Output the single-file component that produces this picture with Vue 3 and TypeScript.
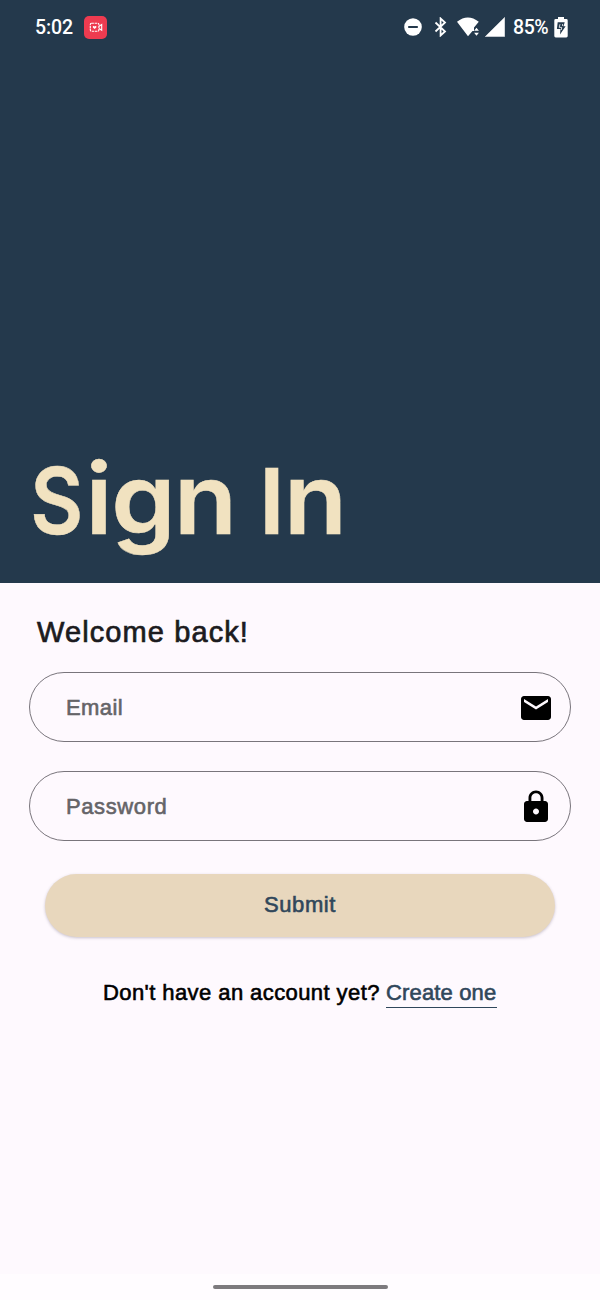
<script setup lang="ts">
import { ref } from 'vue'

const email = ref<string>('')
const password = ref<string>('')
</script>

<template>
  <main class="screen">
    <header class="hero">
      <div class="status">
        <span class="time">5:02</span>
        <svg class="rec" width="23" height="23" viewBox="0 0 23 23">
          <rect width="23" height="23" rx="5" fill="#ee3b50" />
          <g fill="none" stroke="#fff" stroke-width="1.1">
            <rect x="6.3" y="7.3" width="8.6" height="8" rx="1.2" stroke-dasharray="2.4 .7" />
            <path d="M15 10.3l2.700-1.700v5.600L15 12.500" />
          </g>
          <path d="M10.600 13.100l-1.700-1.700c-.5-1.300 1-1.800 1.700-.8.7-1 2.200-.5 1.700.8z" fill="#fff" />
        </svg>
        <span class="grow"></span>
        <svg class="dnd" width="18" height="18" viewBox="0 0 18 18">
          <circle cx="9" cy="9" r="8.8" fill="#fff" />
          <path d="M4.200 9h9.600" stroke="#24394c" stroke-width="2" />
        </svg>
        <svg class="bt" width="14" height="20" viewBox="0 0 14 20">
          <path d="M1.500 5.500l9.500 9-4.400 4V1.500l4.400 4-9.500 9" fill="none" stroke="#fff" stroke-width="1.800" />
        </svg>
        <svg class="wifi" width="24" height="20" viewBox="0 0 24 20">
          <path d="M0 4.800Q10.800-3.800 21.800 4.800L17 10.500V14l-1.500 0L11 19.200z" fill="#fff" />
          <path d="M17.100 13.700l2.400-3 2.400 3zM17.100 15.700h4.800l-2.400 3z" fill="#fff" />
        </svg>
        <svg class="cell" width="20" height="20" viewBox="0 0 20 20">
          <path d="M19.600.4v19.200H.3z" fill="#fff" stroke="#fff" stroke-width=".5" />
        </svg>
        <span class="percent">85%</span>
        <svg class="battery" width="14" height="21" viewBox="0 0 14 21">
          <path d="M4 0h6v2h2.300q1.400 0 1.400 1.400v15.700q0 1.400-1.400 1.400H1.700Q.3 20.500.3 19.100V3.400Q.3 2 1.700 2H4z" fill="#fff" />
          <path d="M3.700 5.200h7L9.500 9.200h2.100L6 17.600l.5-5.500H2.900z" fill="#24394c" />
          <path d="M6 7.200l-.8 3.200h2.500L7.300 13M8.600 7v2" fill="none" stroke="#fff" stroke-width=".8" />
        </svg>
      </div>
      <h1 class="title">
        <svg width="340" height="122" viewBox="0 0 340 122">
          <text class="initial" transform="scale(.885 1)" x="11.700" y="85">S</text>
          <text class="letters" transform="scale(1.050 1)" y="85"><tspan x="62.300 86.900 146.800">ign</tspan><tspan class="capital" x="209 227.300"> I</tspan><tspan x="251.500">n</tspan></text>
        </svg>
      </h1>
    </header>

    <section class="body">
      <h2 class="welcome">Welcome back!</h2>
      <form @submit.prevent>
        <label class="field">
          <input v-model="email" class="email" type="text" placeholder="Email" />
          <svg width="36" height="36" viewBox="0 0 24 24">
            <path d="M20 4H4c-1.100 0-1.990.9-1.990 2L2 18c0 1.100.9 2 2 2h16c1.100 0 2-.9 2-2V6c0-1.100-.9-2-2-2zm0 4l-8 5-8-5V6l8 5 8-5v2z" />
          </svg>
        </label>
        <label class="field">
          <input v-model="password" class="password" type="password" placeholder="Password" />
          <svg width="36" height="36" viewBox="0 0 24 24">
            <path d="M18 8h-1V6c0-2.760-2.240-5-5-5S7 3.240 7 6v2H6c-1.100 0-2 .9-2 2v10c0 1.100.9 2 2 2h12c1.100 0 2-.9 2-2V10c0-1.100-.9-2-2-2zm-6 9c-1.100 0-2-.9-2-2s.9-2 2-2 2 .9 2 2-.9 2-2 2zm3.100-9H8.900V6c0-1.710 1.390-3.100 3.100-3.100s3.100 1.390 3.100 3.100v2z" />
          </svg>
        </label>
        <button class="submit" type="submit">Submit</button>
      </form>
      <p class="signup">
        <span>Don't have an account yet?</span>
        <a class="link">Create one</a>
      </p>
    </section>
    <footer class="nav"><div class="handle"></div></footer>
  </main>
</template>

<style>
body {
  margin: 0;
}
</style>

<style scoped>
.screen {
  width: 600px;
  height: 1300px;
  display: flex;
  flex-direction: column;
  overflow: hidden;
  background: #fef9fe;
  color: #000;
  font-family: "Liberation Sans", Arial, sans-serif;
}
.hero {
  height: 583px;
  flex: none;
  display: flex;
  flex-direction: column;
  justify-content: space-between;
  background: #24394c;
}
.status {
  height: 54px;
  padding: 0 32px 0 35px;
  display: flex;
  align-items: center;
  color: #fff;
  font: 500 19.500px/54px Roboto, sans-serif;
}
.status svg {
  flex: none;
}
.time {
  width: 49px;
  padding-top: 2px;
  letter-spacing: -0.1px;
}
.grow {
  flex: 1;
}
.bt {
  margin-left: 12px;
}
.wifi {
  margin-left: 9px;
}
.cell {
  margin-left: 4px;
}
.percent {
  width: 41px;
  margin-left: 8px;
  padding-top: 2px;
  letter-spacing: -0.4px;
  white-space: nowrap;
}
.title {
  margin: 0 0 12px 20px;
  height: 122px;
}
.title svg {
  display: block;
  overflow: visible;
}
.title text {
  fill: #f1e2c0;
  stroke: #f1e2c0;
  stroke-width: 0.5px;
}
.letters {
  font: 600 98px Inter, sans-serif;
}
.initial {
  font: 600 92px Inter, sans-serif;
}
.capital {
  font-size: 90px;
}
.body {
  flex: 1;
}
.welcome {
  margin: 29px 0 0 37px;
  font-size: 29px;
  font-weight: 400;
  line-height: 40px;
  letter-spacing: 1.100px;
  color: #1c1b20;
  -webkit-text-stroke: 0.7px #1c1b20;
}
form {
  padding: 20px 29px 0;
}
.field {
  height: 70px;
  margin-bottom: 29px;
  padding: 1px 16.500px 0 36px;
  box-sizing: border-box;
  display: flex;
  align-items: center;
  border: 1.500px solid #79757c;
  border-radius: 35px;
}
.field svg {
  flex: none;
}
input {
  flex: 1;
  min-width: 0;
  padding: 1px 0 0;
  border: 0;
  outline: 0;
  background: transparent;
  font: 22px/30px "Liberation Sans", Arial, sans-serif;
}
input::placeholder {
  color: #656468;
  opacity: 1;
  -webkit-text-stroke: 0.6px #656468;
}
.email {
  letter-spacing: 0.4px;
}
.password {
  letter-spacing: 0.600px;
}
.submit {
  display: block;
  width: 510px;
  height: 63px;
  margin: 33px 0 0 16px;
  padding: 0 0 2px;
  border: 0;
  border-radius: 32px;
  background: #e8d7bd;
  box-shadow: 0 1px 3px rgba(60, 50, 80, 0.28);
  color: #30475b;
  font: 22px/30px "Liberation Sans", Arial, sans-serif;
  letter-spacing: 0.6px;
  -webkit-text-stroke: 0.6px #30475b;
}
.signup {
  margin: 42px 0 0 103px;
  display: flex;
  align-items: flex-start;
  font-size: 22px;
  line-height: 28px;
  white-space: nowrap;
  -webkit-text-stroke: 0.6px currentColor;
}
.signup span {
  width: 283px;
  letter-spacing: 0.420px;
}
.link {
  width: 111px;
  border-bottom: 1px solid #30475b;
  color: #30475b;
  letter-spacing: 0.150px;
}
.nav {
  height: 26px;
  padding-top: 11px;
  box-sizing: border-box;
  background: #fffcff;
}
.handle {
  width: 175px;
  height: 4px;
  margin: 0 auto;
  border-radius: 2px;
  background: #7d7a7e;
}
</style>
